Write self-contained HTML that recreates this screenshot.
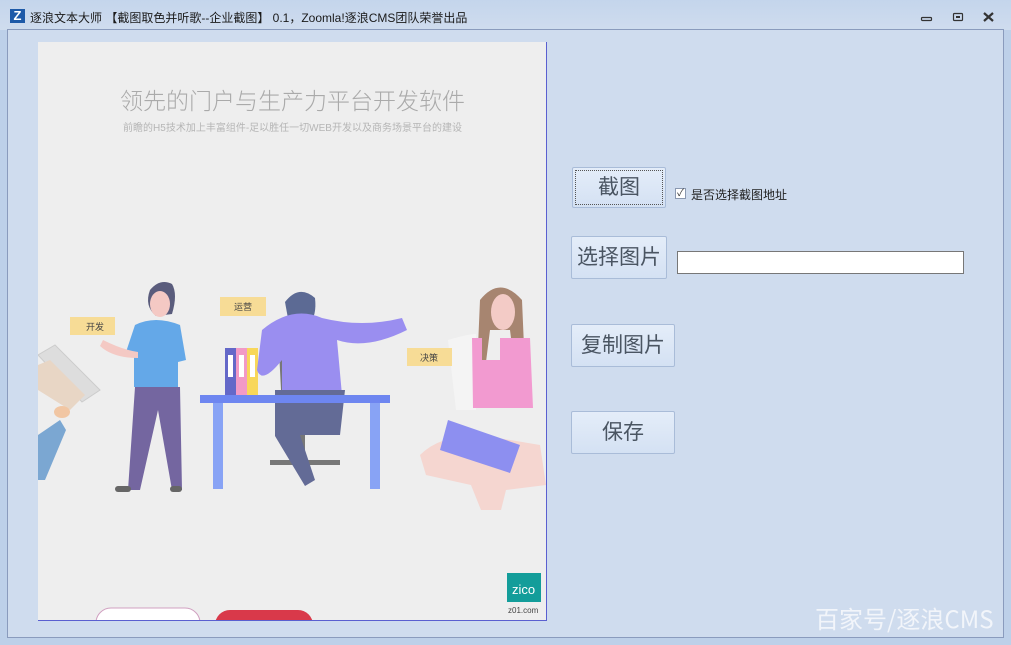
<!DOCTYPE html>
<html><head><meta charset="utf-8"><style>
*{margin:0;padding:0;box-sizing:border-box}
body{width:1011px;height:645px;overflow:hidden;background:#bdd0e9;font-family:"Liberation Sans","Noto Sans CJK SC",sans-serif;position:relative}
.title{position:absolute;left:0;top:0;width:1011px;height:30px;background:linear-gradient(#c4d5ec,#cfdcee);}
.title .t{position:absolute;left:30px;top:9px;font-size:12px;color:#1a1a1a;white-space:nowrap}
.logo{position:absolute;left:10px;top:9px;width:15px;height:14px;background:#1e5aa8;color:#fff;font-weight:bold;font-size:13px;line-height:14px;text-align:center}
.client{position:absolute;left:7px;top:29px;width:997px;height:609px;background:#cfdcee;border:1px solid #8a9bbd}
.img{position:absolute;left:38px;top:42px;width:509px;height:579px;background:#eeeeee;border-right:1px solid #5a5fd0;border-bottom:1px solid #5a5fd0;overflow:hidden}
.btn{position:absolute;background:linear-gradient(#e4edf9,#d4e1f3);border:1px solid #a9bcd8;border-radius:2px;font-family:"Liberation Sans","Noto Sans CJK SC",sans-serif;color:#4a5562;text-align:center}
</style></head><body>
<div class="title">
<div class="logo">Z</div>
<div class="t">逐浪文本大师 【截图取色并听歌--企业截图】 0.1，Zoomla!逐浪CMS团队荣誉出品</div>
<svg style="position:absolute;left:920px;top:10px" width="80" height="14">
<rect x="1.5" y="7.5" width="10" height="3" rx="1" fill="none" stroke="#333" stroke-width="1.2"/>
<rect x="33.5" y="3.5" width="9" height="7" rx="1" fill="none" stroke="#333" stroke-width="1.2"/>
<rect x="36" y="6" width="4" height="2" fill="#333"/>
<path d="M64 3 L73 11 M73 3 L64 11" stroke="#333" stroke-width="2.2"/>
</svg>
</div>
<div class="client"></div>
<div class="img">
<div style="position:absolute;left:0;width:509px;top:40px;text-align:center;font-size:23px;color:#aaa;font-weight:300">领先的门户与生产力平台开发软件</div>
<div style="position:absolute;left:0;width:509px;top:77px;text-align:center;font-size:10px;color:#b5b5b5">前瞻的H5技术加上丰富组件-足以胜任一切WEB开发以及商务场景平台的建设</div>
<svg width="509" height="579" style="position:absolute;left:0;top:0">
<g transform="translate(-38,-42)">
<polygon points="38,355 55,345 100,390 82,402" fill="#ddd" stroke="#ccc"/>
<polygon points="38,365 50,360 85,395 70,410 38,390" fill="#e8d6c5"/>
<polygon points="38,435 60,420 66,430 45,480 38,480" fill="#7ba7d2"/>
<ellipse cx="62" cy="412" rx="8" ry="6" fill="#f1c6a3"/>
<path d="M150 290 q10-12 22-6 q6 10 0 30 l-16 2 q-12-10-6-26z" fill="#5a5c7c"/>
<ellipse cx="160" cy="304" rx="10" ry="13" fill="#f4c9c4"/>
<path d="M135 325 q20-10 45 0 l6 35 l-8 2 l0 25 l-44 0 l0 -35 l-8 0z" fill="#64a8e8"/>
<path d="M135 387 l45 0 l2 103 l-10 0 l-14-80 l-18 80 l-12 0z" fill="#7466a0"/>
<path d="M103 340 q20 10 35 12 l0 6 q-25 0-38-12z" fill="#f4c9c4"/>
<rect x="115" y="486" width="16" height="6" rx="3" fill="#666"/>
<rect x="170" y="486" width="12" height="6" rx="3" fill="#666"/>
<rect x="70" y="317" width="45" height="18" fill="#f7dc96"/>
<text x="86" y="330" font-size="9" fill="#444">开发</text>
<rect x="225" y="348" width="11" height="47" fill="#6468c8"/>
<rect x="236" y="348" width="11" height="47" fill="#f29ac6"/>
<rect x="247" y="348" width="11" height="47" fill="#f8d75a"/>
<rect x="228" y="355" width="5" height="22" fill="#fff"/><rect x="239" y="355" width="5" height="22" fill="#fff"/><rect x="250" y="355" width="5" height="22" fill="#fff"/>
<path d="M278 330 q10-10 20 0 l5 90 l30 0 l0 10 l-50 0z" fill="#777"/>
<rect x="300" y="420" width="5" height="40" fill="#777"/>
<rect x="270" y="460" width="70" height="5" fill="#777"/>
<path d="M285 302 q14-18 30-4 q2 18-6 26 l-20 0z" fill="#5c6a94"/>
<path d="M262 330 q30-25 60-12 q40 10 80 0 l5 12 q-40 20-70 10 l5 55 l-60 0 l0 -35 q-20 25-25 10z" fill="#9a8ef0"/>
<path d="M275 390 l70 0 l-5 45 l-40 0 l15 45 l-10 6 l-30-50z" fill="#636b96"/>
<rect x="220" y="297" width="46" height="19" fill="#f7dc96"/>
<text x="234" y="310" font-size="9" fill="#444">运营</text>
<rect x="200" y="395" width="190" height="8" fill="#6e86f0"/>
<rect x="213" y="403" width="10" height="86" fill="#88a3f5"/>
<rect x="370" y="403" width="10" height="86" fill="#88a3f5"/>
<path d="M480 300 q20-25 42 0 l3 70 l-10 0 l-5-40 l-20 0 l-5 40 l-8 0z" fill="#a78570"/>
<ellipse cx="503" cy="312" rx="12" ry="18" fill="#f3cbc6"/>
<path d="M448 340 q20-6 28-6 l0 76 l-20 0z" fill="#f4f4f4"/>
<path d="M472 338 l10 0 l0 22 l18 0 l0-22 l30 0 l3 70 l-60 0z" fill="#f29ad0"/>
<path d="M420 455 q20-20 60-20 l60 10 l6 40 l-40 5 l-5 20 l-20 0 l-10-25 l-45-10z" fill="#f6d0c8" opacity=".8"/>
<polygon points="448,420 520,445 510,473 440,450" fill="#8d8ff0"/>
<rect x="407" y="348" width="45" height="18" fill="#f7dc96"/>
<text x="420" y="361" font-size="9" fill="#444">决策</text>
<rect x="96" y="608" width="104" height="30" rx="15" fill="#fff" stroke="#d0a0c0"/>
<rect x="215" y="610" width="98" height="30" rx="15" fill="#d9394a"/>
<rect x="507" y="573" width="34" height="29" fill="#139d9a"/>
<text x="512" y="594" font-size="13" fill="#fff">zico</text>
<text x="508" y="613" font-size="8" fill="#444">z01.com</text>
</g>
</svg>
</div>
<div class="btn" style="left:572px;top:167px;width:94px;height:41px;font-size:21px;line-height:39px;"><div style="position:absolute;inset:2px;border:1px dotted #555"></div>截图</div>
<div style="position:absolute;left:675px;top:188px;width:11px;height:11px;border:1px solid #8a98b0;background:#fff;font-size:10px;line-height:9px;text-align:center;color:#333">✓</div>
<div style="position:absolute;left:691px;top:186px;font-size:12px;color:#222">是否选择截图地址</div>
<div class="btn" style="left:571px;top:236px;width:96px;height:43px;font-size:21px;line-height:41px;">选择图片</div>
<div style="position:absolute;left:677px;top:251px;width:287px;height:23px;background:#fff;border:1px solid #777"></div>
<div class="btn" style="left:571px;top:324px;width:104px;height:43px;font-size:21px;line-height:41px;">复制图片</div>
<div class="btn" style="left:571px;top:411px;width:104px;height:43px;font-size:21px;line-height:41px;">保存</div>
<div style="position:absolute;left:815px;top:600px;font-size:24px;color:#f2f5fa;font-family:'Noto Sans CJK SC','Liberation Sans',sans-serif">百家号/逐浪CMS</div>
</body></html>
